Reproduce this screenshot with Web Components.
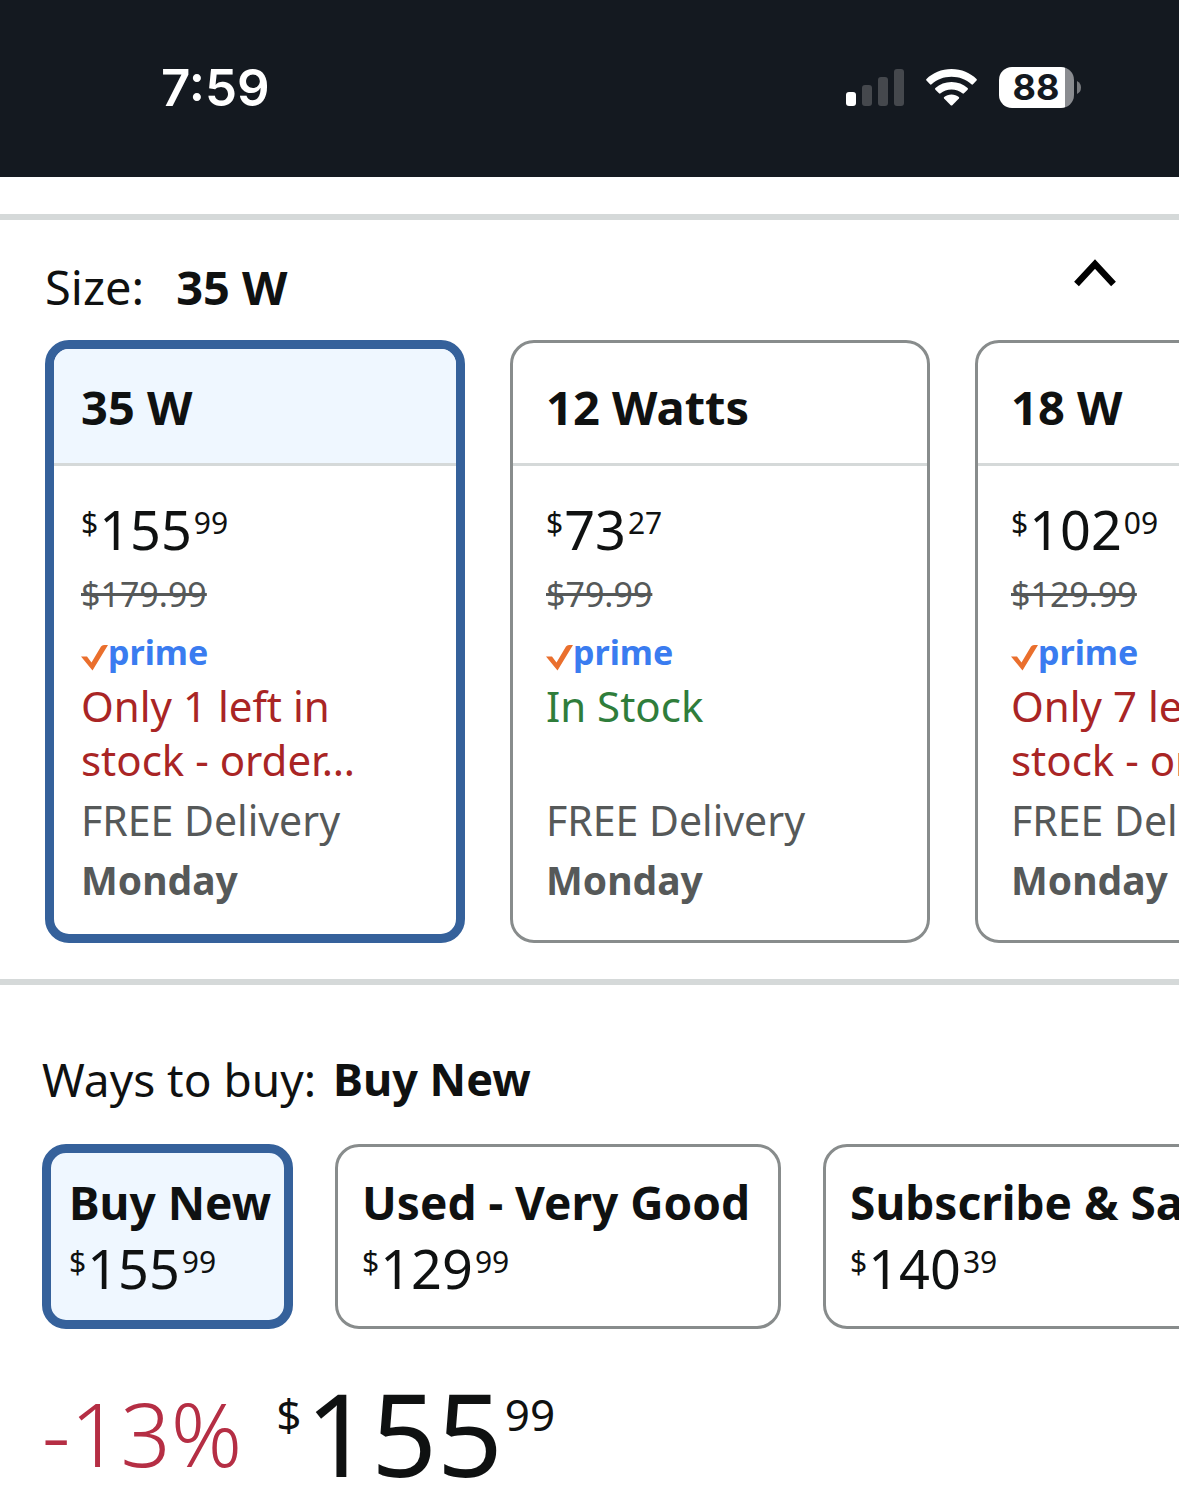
<!DOCTYPE html>
<html lang="en">
<head>
<meta charset="utf-8">
<meta name="viewport" content="width=device-width">
<title>Product options</title>
<style>
body{margin:0;background:#fff;color:#0f1111;font-family:"Noto Sans","Open Sans",sans-serif;overflow-x:hidden}
</style>
</head>
<body>
<product-page></product-page>
<script>
const define = (name, html, init) => {
  const t = document.createElement('template');
  t.innerHTML = html;
  customElements.define(name, class extends HTMLElement {
    constructor() {
      super();
      this.attachShadow({mode: 'open'}).append(t.content.cloneNode(true));
    }
    connectedCallback() { if (init) init(this, this.shadowRoot); }
  });
};

define('status-bar', `
<style>
:host{display:flex;justify-content:space-between;align-items:center;height:177px;padding:0 97px 2px 161px;box-sizing:border-box;background:#141920;color:#fff;font-family:Inter,sans-serif}
time{font-size:51px;line-height:60px;font-weight:600}
.icons{display:flex;align-items:center;gap:22px}
svg{display:block}
.battery{display:flex;align-items:center;gap:3px}
.level{width:75px;height:41px;border-radius:13px;box-sizing:border-box;padding-right:1px;background:linear-gradient(90deg,#fff 66px,#8a8c90 66px);color:#141920;font-size:36px;line-height:41px;font-weight:700;text-align:center}
</style>
<time>7:59</time>
<div class="icons">
<svg width="58" height="37" viewBox="0 0 58 37"><rect y="23" width="10" height="14" rx="3" fill="#fff"/><g fill="#45484d"><rect x="16" y="16" width="10" height="21" rx="3"/><rect x="32" y="8" width="10" height="29" rx="3"/><rect x="48" width="10" height="37" rx="3"/></g></svg>
<svg width="51" height="37" viewBox="0 0 51 37" fill="#fff"><path d="M25.500 0C35.500 0 44.500 4 50.500 10Q51.300 10.800 50.500 11.600L47 15.300Q46.200 16 45.400 15.300C40 10.500 33.200 7.800 25.500 7.800S11 10.500 5.600 15.300Q4.800 16 4 15.300L.5 11.600Q-.3 10.800.5 10C6.500 4 15.500 0 25.500 0Z"/><path d="M25.500 13C31.700 13 37.300 15.200 41.600 19.100Q42.400 19.900 41.600 20.700L38 24.200Q37.200 25 36.400 24.300C33.500 22 29.700 20.600 25.500 20.600S17.500 22 14.600 24.300Q13.800 25 13 24.200L9.400 20.700Q8.600 19.900 9.400 19.100C13.700 15.200 19.300 13 25.500 13Z"/><path d="M25.500 25.500C28.300 25.500 30.900 26.500 32.800 28Q33.600 28.700 32.900 29.500L26.300 36.200Q25.500 37 24.700 36.200L18.100 29.500Q17.400 28.700 18.200 28C20.100 26.500 22.700 25.500 25.500 25.500Z"/></svg>
<div class="battery"><div class="level">88</div><svg width="5" height="13" viewBox="0 0 5 13"><path d="M0 0Q4 2 4 6.500T0 13Z" fill="#77797d"/></svg></div>
</div>`);

define('price-tag', `
<style>
:host{display:flex;align-items:flex-start;font-size:54px;line-height:60px}
small{font-size:30px;line-height:48px}
.s{margin-right:1px}
.c{margin-left:2px}
:host([large]){font-size:115px;line-height:106px;font-weight:450}
:host([large]) small{font-size:44px;line-height:68px;font-weight:400}
:host([large]) .s{margin-right:4px}
</style>
<small class="s">$</small><span class="w"></span><small class="c"></small>`, (el, r) => {
  const [w, c] = (el.getAttribute('value') || '').split('.');
  r.querySelector('.w').textContent = w;
  r.querySelector('.c').textContent = c || '';
});

define('prime-badge', `
<style>
:host{display:flex;align-items:flex-start;height:36px;font-size:34px;line-height:30px;font-weight:700;color:#3a7cf0}
svg{margin-top:7px}
</style>
<svg width="27" height="27" viewBox="0 0 27 27"><path d="M0 12.500H6L10.500 18.500L20 2.500Q21 1 23 1H27L11.500 26.500Z" fill="#ea6f2d"/></svg><span>prime</span>`);

define('size-card', `
<style>
:host{display:block;flex:0 0 420px}
button{display:flex;flex-direction:column;width:100%;padding:0;border:3px solid #888c8c;border-radius:24px;background:#fff;color:inherit;font:inherit;text-align:left;overflow:hidden}
button>*{box-sizing:border-box;width:100%}
.head{padding:6px 33px 0;font-size:47px;line-height:116px;height:123px;font-weight:700;border-bottom:3px solid #d5d9d9}
.body{display:flex;flex-direction:column;padding:33px 33px 30px;font-size:41px;line-height:60px;color:#565959}
price-tag{color:#0f1111}
s{font-size:34px;line-height:42px;margin:14px 0 22px}
.stock{min-height:108px;font-size:42px;line-height:54px;margin:6px 0 3px;color:#a92525}
b{font-size:39px}
.stock.in{color:#2f7d3b}
:host([selected]) button{border:9px solid #35619b}
:host([selected]) .head{background:#eff7ff;height:117px;padding:0 27px}
:host([selected]) .body{padding:33px 27px 24px}
</style>
<button type="button"><span class="head"></span><span class="body"><price-tag></price-tag><s></s><prime-badge></prime-badge><span class="stock"><slot></slot></span><span>FREE Delivery</span><b>Monday</b></span></button>`, (el, r) => {
  r.querySelector('.head').textContent = el.getAttribute('name');
  const p = document.createElement('price-tag');
  p.setAttribute('value', el.getAttribute('price'));
  r.querySelector('price-tag').replaceWith(p);
  r.querySelector('s').textContent = el.getAttribute('was');
  if (el.hasAttribute('instock')) r.querySelector('.stock').classList.add('in');
  r.querySelector('button').setAttribute('aria-pressed', el.hasAttribute('selected'));
});

define('buy-option', `
<style>
:host{display:block;flex:none}
button{display:block;width:100%;padding:20px 19px 28px 24px;border:3px solid #888c8c;border-radius:24px;background:#fff;color:inherit;font:inherit;text-align:left;white-space:nowrap}
b{display:block;font-size:46px;line-height:70px;padding-bottom:1px}
:host([selected]) button{border:9px solid #35619b;background:#eff7ff;padding:14px 13px 22px 18px}
</style>
<button type="button"><b><slot></slot></b><price-tag></price-tag></button>`, (el, r) => {
  const p = document.createElement('price-tag');
  p.setAttribute('value', el.getAttribute('price'));
  r.querySelector('price-tag').replaceWith(p);
  r.querySelector('button').setAttribute('aria-pressed', el.hasAttribute('selected'));
});

define('product-page', `
<style>
:host{display:block;overflow:hidden}
hr{margin:0;border:0;height:6px;background:#d5d9d9}
.sizes{margin-top:37px}
.top{display:flex;justify-content:space-between;align-items:flex-start;padding:34px 63px 20px 45px}
h2{margin:0;font-size:47px;line-height:66px;font-weight:400;display:flex;gap:32px}
.toggle{padding:0;border:0;background:none;margin-top:5px}
svg{display:block}
.row{display:flex;overflow:hidden}
.cards{gap:45px;padding:0 0 36px 45px}
.ways{padding:61px 0 0 42px}
.ways h2{font-size:46px;gap:17px;padding-bottom:32px}
.ways b{font-size:45px}
.opts{gap:42px}
.wide{min-width:446px}
.deal{display:flex;align-items:flex-start;gap:34px;padding:51px 0 0 42px}
.off{font-size:88px;line-height:106px;font-weight:300;color:#b52e44}
</style>
<status-bar></status-bar>
<section class="sizes"><hr>
<div class="top"><h2><span>Size:</span><b>35 W</b></h2><button class="toggle" type="button" aria-label="Collapse sizes"><svg width="42" height="28" viewBox="0 0 42 28"><path d="M2.500 25L21 5L39.500 25" fill="none" stroke="#000" stroke-width="6.500"/></svg></button></div>
<div class="row cards">
<size-card selected name="35 W" price="155.99" was="$179.99">Only 1 left in<br>stock - order…</size-card>
<size-card instock name="12 Watts" price="73.27" was="$79.99">In Stock</size-card>
<size-card name="18 W" price="102.09" was="$129.99">Only 7 left in<br>stock - order…</size-card>
</div></section><hr>
<section class="ways"><h2><span>Ways to buy:</span><b>Buy New</b></h2>
<div class="row opts"><buy-option selected price="155.99">Buy New</buy-option><buy-option class="wide" price="129.99">Used - Very Good</buy-option><buy-option price="140.39">Subscribe &amp; Save</buy-option></div></section>
<section class="deal"><span class="off">-13%</span><price-tag large value="155.99"></price-tag></section>`);
</script>
</body>
</html>
